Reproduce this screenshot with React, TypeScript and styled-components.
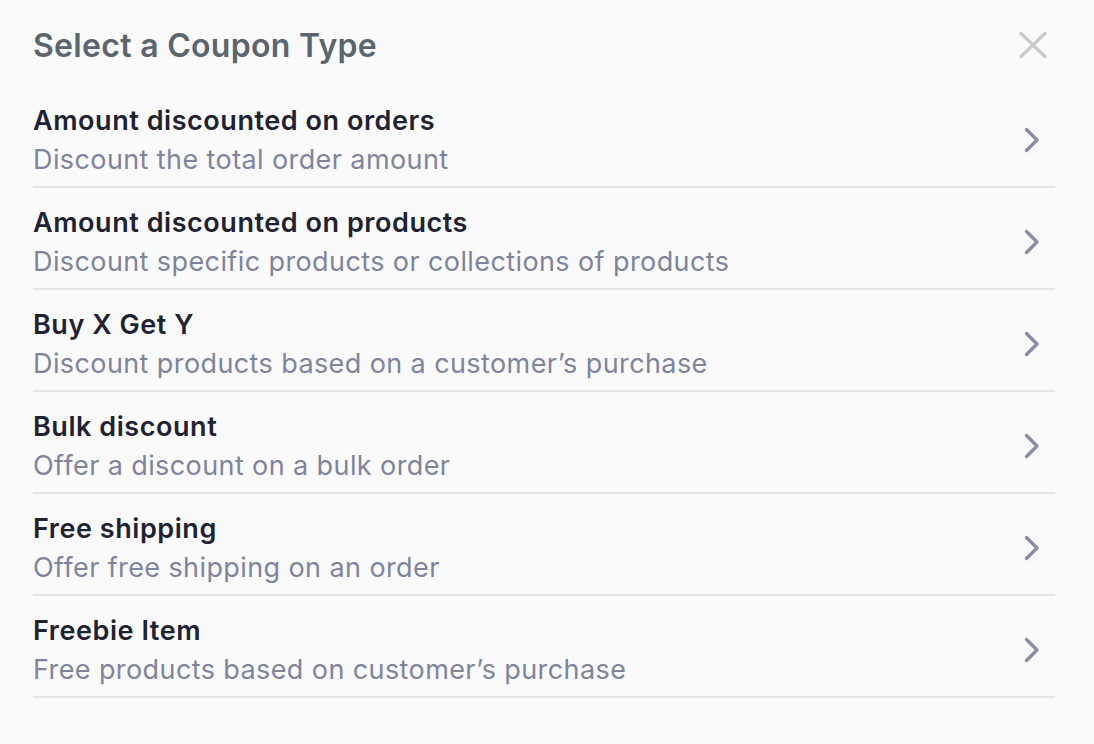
import React from 'react';
import styled, { createGlobalStyle } from 'styled-components';

const GlobalStyle = createGlobalStyle`
  html, body {
    margin: 0;
    padding: 0;
    background: #fafafa;
  }
  body {
    font-family: Inter, "Noto Sans", "Liberation Sans", sans-serif;
    -webkit-font-smoothing: antialiased;
  }
`;

const Panel = styled.div`
  width: 1094px;
  height: 744px;
  box-sizing: border-box;
  padding: 27px 39px 0 33px;
  background: #fafafa;
`;

const Header = styled.div`
  display: flex;
  justify-content: space-between;
  align-items: center;
  height: 38px;
  margin-bottom: 21px;
`;

const Title = styled.h2`
  margin: 0;
  font-size: 32px;
  line-height: 38px;
  font-weight: 600;
  color: #5b656d;
  letter-spacing: 0.3px;
`;

const CloseButton = styled.button`
  display: flex;
  align-items: center;
  justify-content: center;
  width: 30px;
  height: 28px;
  margin-right: 7px;
  margin-top: -2px;
  padding: 0;
  border: none;
  background: transparent;
  cursor: pointer;
`;

const List = styled.div`
  display: flex;
  flex-direction: column;
`;

const Row = styled.div`
  display: flex;
  align-items: center;
  justify-content: space-between;
  padding: 15px 0 7px;
  border-bottom: 2px solid #e5e5e7;
  cursor: pointer;
`;

const RowText = styled.div`
  display: flex;
  flex-direction: column;
`;

const RowTitle = styled.div`
  font-size: 27px;
  line-height: 39px;
  font-weight: 600;
  color: #1f2232;
  letter-spacing: 0.55px;
`;

const RowSubtitle = styled.div`
  font-size: 27px;
  line-height: 39px;
  font-weight: 400;
  color: #7f849d;
  letter-spacing: 0.4px;
`;

const Chevron = styled.svg`
  width: 16px;
  height: 26px;
  margin-right: 15px;
  flex-shrink: 0;
`;

const coupons = [
  { title: 'Amount discounted on orders', desc: 'Discount the total order amount' },
  { title: 'Amount discounted on products', desc: 'Discount specific products or collections of products' },
  { title: 'Buy X Get Y', desc: 'Discount products based on a customer’s purchase' },
  { title: 'Bulk discount', desc: 'Offer a discount on a bulk order' },
  { title: 'Free shipping', desc: 'Offer free shipping on an order' },
  { title: 'Freebie Item', desc: 'Free products based on customer’s purchase' },
];

export default function App() {
  return (
    <>
      <GlobalStyle />
      <Panel>
        <Header>
          <Title>Select a Coupon Type</Title>
          <CloseButton aria-label="Close">
            <svg width="30" height="28" viewBox="0 0 30 28">
              <path d="M2 1.5 L28 26.5 M28 1.5 L2 26.5" stroke="#c9c9c9" strokeWidth="3.2" fill="none" />
            </svg>
          </CloseButton>
        </Header>
        <List>
          {coupons.map((c) => (
            <Row key={c.title}>
              <RowText>
                <RowTitle>{c.title}</RowTitle>
                <RowSubtitle>{c.desc}</RowSubtitle>
              </RowText>
              <Chevron viewBox="0 0 16 26">
                <path d="M2.5 2.5 L13 13 L2.5 23.5" stroke="#8a8da6" strokeWidth="3.4" fill="none" strokeLinecap="round" strokeLinejoin="round" />
              </Chevron>
            </Row>
          ))}
        </List>
      </Panel>
    </>
  );
}
